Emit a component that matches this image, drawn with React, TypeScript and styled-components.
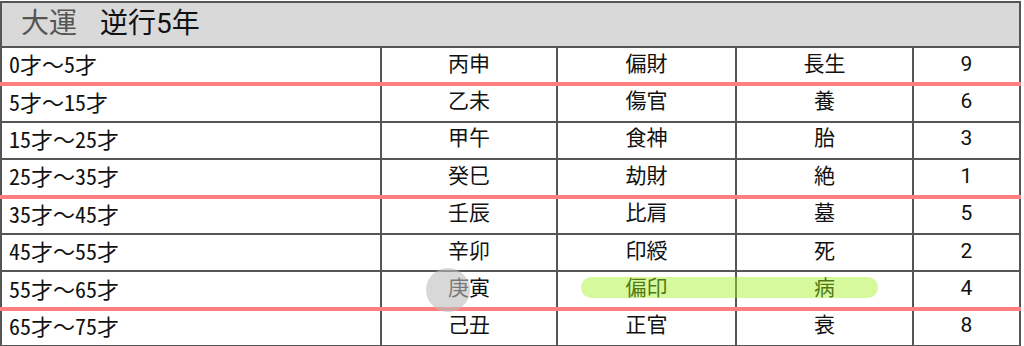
import React from 'react'
import styled, { createGlobalStyle } from 'styled-components'

const GlobalStyle = createGlobalStyle`
  html, body {
    margin: 0;
    padding: 0;
    background: #ffffff;
  }
  body {
    font-family: Roboto, "Noto Sans CJK JP", sans-serif;
    color: #111111;
  }
`

const Wrapper = styled.div`
  position: relative;
  width: 1024px;
  height: 346px;
  padding: 1px 0 0 0;
  box-sizing: border-box;
  overflow: hidden;
`

const Table = styled.table`
  width: 1021px;
  border-collapse: collapse;
  table-layout: fixed;
  border: 2px solid #555555;
`

const HeaderCell = styled.th`
  height: 41px;
  padding: 0 0 2px 19px;
  background: #d9d9d9;
  border: 2px solid #555555;
  text-align: left;
  font-weight: 400;
  font-size: 28px;
  line-height: 1;
  vertical-align: middle;
`

const HeaderLabel = styled.span`
  color: #555555;
  margin-right: 23px;
`

const HeaderValue = styled.span`
  color: #111111;
`

const Row = styled.tr`
  height: 37.4px;
`

const Cell = styled.td<{ $mono?: boolean; $marked?: boolean }>`
  position: relative;
  padding: 0 0 ${p => (p.$mono ? '5px 7px' : '3px 0')};
  border: 2px solid #555555;
  text-align: ${p => (p.$mono ? 'left' : 'center')};
  font-family: ${p =>
    p.$mono
      ? '"Noto Sans Mono CJK JP", "DejaVu Sans Mono", monospace'
      : 'Roboto, "Noto Sans CJK JP", sans-serif'};
  font-size: ${p => (p.$mono ? '22px' : '21px')};
  line-height: 1;
  vertical-align: middle;
  white-space: nowrap;

  &::after {
    content: '';
    display: ${p => (p.$marked ? 'block' : 'none')};
    position: absolute;
    left: -2px;
    right: -2px;
    bottom: -3px;
    height: 4px;
    background: #ff7f7f;
    z-index: 1;
  }
`

const Highlight = styled.div`
  position: absolute;
  left: 581px;
  top: 277px;
  width: 297px;
  height: 21px;
  border-radius: 11px;
  background: rgba(161, 242, 33, 0.45);
  pointer-events: none;
  z-index: 2;
`

const Ripple = styled.div`
  position: absolute;
  left: 426px;
  top: 268px;
  width: 44px;
  height: 44px;
  border-radius: 50%;
  background: rgba(190, 190, 190, 0.6);
  pointer-events: none;
  z-index: 2;
`

type Period = {
  age: string
  stem: string
  star: string
  stage: string
  power: number
  marked?: boolean
}

const periods: Period[] = [
  { age: '0才～5才', stem: '丙申', star: '偏財', stage: '長生', power: 9, marked: true },
  { age: '5才～15才', stem: '乙未', star: '傷官', stage: '養', power: 6 },
  { age: '15才～25才', stem: '甲午', star: '食神', stage: '胎', power: 3 },
  { age: '25才～35才', stem: '癸巳', star: '劫財', stage: '絶', power: 1, marked: true },
  { age: '35才～45才', stem: '壬辰', star: '比肩', stage: '墓', power: 5 },
  { age: '45才～55才', stem: '辛卯', star: '印綬', stage: '死', power: 2 },
  { age: '55才～65才', stem: '庚寅', star: '偏印', stage: '病', power: 4, marked: true },
  { age: '65才～75才', stem: '己丑', star: '正官', stage: '衰', power: 8 },
]

export default function App() {
  return (
    <Wrapper>
      <GlobalStyle />
      <Table>
        <colgroup>
          <col style={{ width: 380 }} />
          <col style={{ width: 176 }} />
          <col style={{ width: 179 }} />
          <col style={{ width: 177 }} />
          <col style={{ width: 107 }} />
        </colgroup>
        <thead>
          <tr>
            <HeaderCell colSpan={5}>
              <HeaderLabel>大運</HeaderLabel>
              <HeaderValue>逆行5年</HeaderValue>
            </HeaderCell>
          </tr>
        </thead>
        <tbody>
          {periods.map(p => (
            <Row key={p.age}>
              <Cell $mono $marked={p.marked}>{p.age}</Cell>
              <Cell $marked={p.marked}>{p.stem}</Cell>
              <Cell $marked={p.marked}>{p.star}</Cell>
              <Cell $marked={p.marked}>{p.stage}</Cell>
              <Cell $marked={p.marked}>{p.power}</Cell>
            </Row>
          ))}
        </tbody>
      </Table>
      <Highlight />
      <Ripple />
    </Wrapper>
  )
}
